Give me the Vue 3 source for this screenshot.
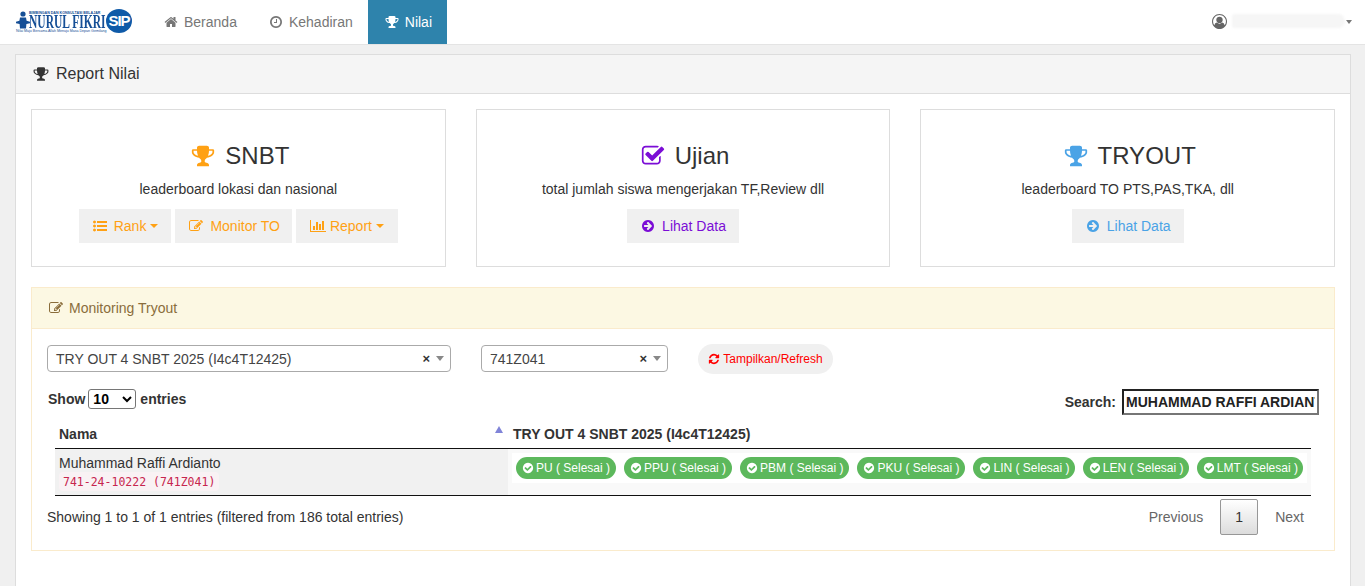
<script setup>
const P = {
  trophy: ['0 0 1792 1792', 'M522 883q-74-162-74-371h-256v96q0 78 94.5 162t235.5 113zm1078-275v-96h-256q0 209-74 371 141-29 235.5-113t94.5-162zm128-128v128q0 71-41.5 143t-112 130-173 97.5-215.5 44.5q-42 54-95 95-38 34-52.5 72.5t-14.5 89.5q0 54 30.5 91t97.5 37q75 0 133.5 45.5t58.5 114.5v64q0 14-9 23t-23 9h-832q-14 0-23-9t-9-23v-64q0-69 58.5-114.5t133.5-45.5q67 0 97.5-37t30.5-91q0-51-14.5-89.5t-52.5-72.5q-53-41-95-95-113-5-215.5-44.5t-173-97.5-112-130-41.5-143v-128q0-40 28-68t68-28h288v-96q0-66 47-113t113-47h576q66 0 113 47t47 113v96h288q40 0 68 28t28 68z'],
  home: ['0 0 1792 1792', 'M1472 992v480q0 26-19 45t-45 19h-384v-384h-256v384h-384q-26 0-45-19t-19-45v-480q0-1 .5-3t.5-3l575-474 575 474q1 2 1 6zm223-69l-62 74q-8 9-21 11h-3q-13 0-21-7l-692-577-692 577q-12 8-24 7-13-2-21-11l-62-74q-8-10-7-23.5t11-21.5l719-599q32-26 76-26t76 26l244 204v-195q0-14 9-23t23-9h192q14 0 23 9t9 23v408l219 182q10 8 11 21.5t-7 23.5z'],
  clock: ['0 0 1792 1792', 'M1024 544v448q0 14-9 23t-23 9h-320q-14 0-23-9t-9-23v-64q0-14 9-23t23-9h224v-352q0-14 9-23t23-9h64q14 0 23 9t9 23zm416 352q0-148-73-273t-198-198-273-73-273 73-198 198-73 273 73 273 198 198 273 73 273-73 198-198 73-273zm224 0q0 209-103 385.5t-279.5 279.5-385.5 103-385.5-103-279.5-279.5-103-385.5 103-385.5 279.5-279.5 385.5-103 385.5 103 279.5 279.5 103 385.5z'],
  check: ['0 0 1792 1792', 'M1472 930v318q0 119-84.5 203.5t-203.5 84.5h-832q-119 0-203.5-84.5t-84.5-203.5v-832q0-119 84.5-203.5t203.5-84.5h832q63 0 117 25 15 7 18 23 3 17-9 29l-49 49q-10 10-23 10-3 0-9-2-23-6-45-6h-832q-66 0-113 47t-47 113v832q0 66 47 113t113 47h832q66 0 113-47t47-113v-254q0-13 9-22l64-64q10-10 23-10 6 0 12 3 20 8 20 29zm231-489l-814 814q-24 24-57 24t-57-24l-430-430q-24-24-24-57t24-57l110-110q24-24 57-24t57 24l263 263 647-647q24-24 57-24t57 24l110 110q24 24 24 57t-24 57z'],
  list: ['0 0 1792 1792', 'M384 1408q0 80-56 136t-136 56-136-56-56-136 56-136 136-56 136 56 56 136zm0-512q0 80-56 136t-136 56-136-56-56-136 56-136 136-56 136 56 56 136zm1408 416v192q0 13-9.5 22.5t-22.5 9.5h-1216q-13 0-22.5-9.5t-9.5-22.5v-192q0-13 9.5-22.5t22.5-9.5h1216q13 0 22.5 9.5t9.5 22.5zm-1408-928q0 80-56 136t-136 56-136-56-56-136 56-136 136-56 136 56 56 136zm1408 416v192q0 13-9.5 22.5t-22.5 9.5h-1216q-13 0-22.5-9.5t-9.5-22.5v-192q0-13 9.5-22.5t22.5-9.5h1216q13 0 22.5 9.5t9.5 22.5zm0-512v192q0 13-9.5 22.5t-22.5 9.5h-1216q-13 0-22.5-9.5t-9.5-22.5v-192q0-13 9.5-22.5t22.5-9.5h1216q13 0 22.5 9.5t9.5 22.5z'],
  edit: ['0 0 1792 1792', 'M888 1184l116-116-152-152-116 116v56h96v96h56zm440-720q-16-16-33 1l-350 350q-17 17-1 33t33-1l350-350q17-17 1-33zm80 594v190q0 119-84.5 203.5t-203.5 84.5h-832q-119 0-203.5-84.5t-84.5-203.5v-832q0-119 84.5-203.5t203.5-84.5h832q63 0 117 25 15 7 18 23 3 17-9 29l-49 49q-14 14-32 8-23-6-45-6h-832q-66 0-113 47t-47 113v832q0 66 47 113t113 47h832q66 0 113-47t47-113v-126q0-13 9-22l64-64q15-15 35-7t20 29zm-96-738l288 288-672 672h-288v-288zm444 132l-92 92-288-288 92-92q28-28 68-28t68 28l152 152q28 28 28 68t-28 68z'],
  bars: ['0 0 2048 1792', 'M640 896v512h-256v-512h256zm384-512v1024h-256v-1024h256zm1024 1152v128h-2048v-1536h128v1408h1920zm-640-896v768h-256v-768h256zm384-384v1152h-256v-1152h256z'],
  arrow: ['0 0 1792 1792', 'M1413 896q0-27-18-45l-91-91-362-362q-18-18-45-18t-45 18l-91 91q-18 18-18 45t18 45l189 189h-502q-26 0-45 19t-19 45v128q0 26 19 45t45 19h502l-189 189q-19 19-19 45t19 45l91 91q18 18 45 18t45-18l362-362 91-91q18-18 18-45zm251 0q0 209-103 385.5t-279.5 279.5-385.5 103-385.5-103-279.5-279.5-103-385.5 103-385.5 279.5-279.5 385.5-103 385.5 103 279.5 279.5 103 385.5z'],
  refresh: ['0 0 1792 1792', 'M1639 1056q0 5-1 7-64 268-268 434.5t-478 166.5q-146 0-282.5-55t-243.5-157l-129 129q-19 19-45 19t-45-19-19-45v-448q0-26 19-45t45-19h448q26 0 45 19t19 45-19 45l-137 137q71 66 161 102t187 36q134 0 250-65t186-179q11-17 53-117 8-23 30-23h192q13 0 22.5 9.5t9.5 22.5zm25-800v448q0 26-19 45t-45 19h-448q-26 0-45-19t-19-45 19-45l138-138q-148-137-349-137-134 0-250 65t-186 179q-11 17-53 117-8 23-30 23h-199q-13 0-22.5-9.5t-9.5-22.5v-7q65-268 270-434.5t480-166.5q146 0 284 55.5t245 156.5l130-129q19-19 45-19t45 19 19 45z'],
  ok: ['0 0 1792 1792', 'M1412 734q0-28-18-46l-91-90q-19-19-45-19t-45 19l-408 407-226-226q-19-19-45-19t-45 19l-91 90q-18 18-18 46 0 27 18 45l362 362q19 19 45 19 27 0 46-19l543-543q18-18 18-45zm252 162q0 209-103 385.5t-279.5 279.5-385.5 103-385.5-103-279.5-279.5-103-385.5 103-385.5 279.5-279.5 385.5-103 385.5 103 279.5 279.5 103 385.5z'],
  user: ['0 0 1792 1792', 'M896 0q182 0 348 71t286 191 191 286 71 348q0 181-70.5 347t-190.5 286-286 191.5-349 71.5-349-71-285.5-191.5-190.5-286-71-347.5 71-348 191-286 286-191 348-71zm619 1351q149-205 149-455 0-156-61-298t-164-245-245-164-298-61-298 61-245 164-164 245-61 298q0 250 149 455 66-327 306-327 131 128 313 128t313-128q240 0 306 327zm-235-647q0-159-112.5-271.5t-271.5-112.5-271.5 112.5-112.5 271.5 112.5 271.5 271.5 112.5 271.5-112.5 112.5-271.5z']
}
const subjects = ['PU', 'PPU', 'PBM', 'PKU', 'LIN', 'LEN', 'LMT']
</script>

<template>
  <div class="page">
    <nav class="nav">
      <div class="logo">
        <div class="logo-left">
          <div class="logo-row">
            <svg class="logo-man" viewBox="0 0 14 18" width="14" height="18">
              <circle cx="7" cy="3" r="2.6" fill="#164f96" />
              <path d="M4 6.5h6l.6 3.2 3.4 1v1.6l-3.6.6-.4 4.6H4l-.4-4.6L0 12.300v-1.600l3.400-1z" fill="#164f96" />
            </svg>
            <div class="logo-words">
              <span class="logo-top">BIMBINGAN DAN KONSULTASI BELAJAR</span>
              <span class="logo-main">NURUL FIKRI</span>
            </div>
          </div>
          <span class="logo-sub">Nilai Maju Bersama Allah Menuju Masa Depan Gemilang</span>
        </div>
        <span class="logo-sip">SIP</span>
      </div>
      <a class="tab"><svg class="ic" :viewBox="P.home[0]"><path :d="P.home[1]" /></svg>Beranda</a>
      <a class="tab"><svg class="ic" :viewBox="P.clock[0]"><path :d="P.clock[1]" /></svg>Kehadiran</a>
      <a class="tab active"><svg class="ic" :viewBox="P.trophy[0]"><path :d="P.trophy[1]" /></svg>Nilai</a>
      <div class="user">
        <svg class="user-ic" :viewBox="P.user[0]"><path :d="P.user[1]" /></svg>
        <span class="user-blur"></span>
        <span class="user-caret"></span>
      </div>
    </nav>

    <section class="panel">
      <header class="panel-head">
        <svg class="head-ic" :viewBox="P.trophy[0]"><path :d="P.trophy[1]" /></svg>Report Nilai
      </header>
      <div class="panel-body">
        <div class="cards">
          <article class="card">
            <h3 class="card-title">
              <svg class="title-ic orange" :viewBox="P.trophy[0]"><path :d="P.trophy[1]" /></svg>SNBT
            </h3>
            <p class="card-text">leaderboard lokasi dan nasional</p>
            <div class="card-btns">
              <a class="btn orange"><svg class="ic g7" :viewBox="P.list[0]"><path :d="P.list[1]" /></svg>Rank<span class="caret"></span></a>
              <a class="btn btn-monitor orange"><svg class="ic g7" :viewBox="P.edit[0]"><path :d="P.edit[1]" /></svg>Monitor TO</a>
              <a class="btn btn-report orange"><svg class="ic wide" :viewBox="P.bars[0]"><path :d="P.bars[1]" /></svg>Report<span class="caret"></span></a>
            </div>
          </article>
          <article class="card">
            <h3 class="card-title">
              <svg class="title-ic purple" :viewBox="P.check[0]"><path :d="P.check[1]" /></svg>Ujian
            </h3>
            <p class="card-text">total jumlah siswa mengerjakan TF,Review dll</p>
            <div class="card-btns">
              <a class="btn purple"><svg class="ic g7" :viewBox="P.arrow[0]"><path :d="P.arrow[1]" /></svg>Lihat Data</a>
            </div>
          </article>
          <article class="card">
            <h3 class="card-title">
              <svg class="title-ic blue" :viewBox="P.trophy[0]"><path :d="P.trophy[1]" /></svg>TRYOUT
            </h3>
            <p class="card-text">leaderboard TO PTS,PAS,TKA, dll</p>
            <div class="card-btns">
              <a class="btn blue"><svg class="ic g7" :viewBox="P.arrow[0]"><path :d="P.arrow[1]" /></svg>Lihat Data</a>
            </div>
          </article>
        </div>

        <section class="monitor">
          <header class="monitor-head">
            <svg class="ic" :viewBox="P.edit[0]"><path :d="P.edit[1]" /></svg>Monitoring Tryout
          </header>
          <div class="monitor-body">
            <div class="filters">
              <div class="sel sel-a"><span>TRY OUT 4 SNBT 2025 (I4c4T12425)</span><b class="sel-x">×</b><i class="sel-arrow"></i></div>
              <div class="sel sel-b"><span>741Z041</span><b class="sel-x">×</b><i class="sel-arrow"></i></div>
              <a class="refresh"><svg class="refresh-ic" :viewBox="P.refresh[0]"><path :d="P.refresh[1]" /></svg>Tampilkan/Refresh</a>
            </div>

            <div class="dt-top">
              <label class="len">Show
                <select class="len-sel"><option>10</option></select>
                entries</label>
              <label class="search">Search:
                <input class="search-in" value="MUHAMMAD RAFFI ARDIANTO" />
              </label>
            </div>

            <table class="tbl">
              <thead>
                <tr>
                  <th class="th-name">Nama<span class="sort"></span></th>
                  <th>TRY OUT 4 SNBT 2025 (I4c4T12425)</th>
                </tr>
              </thead>
              <tbody>
                <tr>
                  <td class="td-name">
                    <div class="name">Muhammad Raffi Ardianto</div>
                    <code class="code">741-24-10222 (741Z041)</code>
                  </td>
                  <td class="td-badges">
                    <div class="badges">
                      <span v-for="s in subjects" :key="s" class="badge">
                        <svg class="badge-ic" :viewBox="P.ok[0]"><path :d="P.ok[1]" /></svg>{{ s }} ( Selesai )
                      </span>
                    </div>
                  </td>
                </tr>
              </tbody>
            </table>

            <div class="dt-bottom">
              <span class="info">Showing 1 to 1 of 1 entries (filtered from 186 total entries)</span>
              <div class="pager">
                <a class="pg">Previous</a>
                <a class="pg current">1</a>
                <a class="pg">Next</a>
              </div>
            </div>
          </div>
        </section>
      </div>
    </section>
  </div>
</template>

<style>
html, body { margin: 0; height: 586px; overflow: hidden; background: #f0f0f0; }
</style>

<style scoped>
.page { font-family: "Liberation Sans", Arial, sans-serif; font-size: 14px; line-height: 20px; color: #333; background: #f0f0f0; height: 586px; overflow: hidden; }
svg { fill: currentColor; display: block; flex: none; }
p, h3 { margin: 0; }

.nav { height: 44px; background: #fff; border-bottom: 1px solid #e4e4e4; display: flex; align-items: stretch; padding-left: 16px; }
.logo { display: flex; align-items: center; width: 132px; color: #164f96; }
.logo-left { width: 90px; display: flex; flex-direction: column; }
.logo-row { display: flex; }
.logo-man { margin-right: -1px; }
.logo-words { display: flex; flex-direction: column; width: 77px; }
.logo-top { font-size: 3.6px; line-height: 4px; font-weight: 700; white-space: nowrap; }
.logo-main { font-family: "Liberation Serif", serif; font-weight: 700; font-size: 18px; line-height: 14px; white-space: nowrap; transform: scaleX(.64); transform-origin: left; }
.logo-sub { font-size: 3.6px; line-height: 5px; white-space: nowrap; }
.logo-sip { width: 26px; height: 24px; border-radius: 50%; background: #0f5aa8; color: #fff; font-weight: 700; font-size: 15px; line-height: 24px; text-align: center; letter-spacing: -1px; margin-top: -2px; }
.tab { display: flex; align-items: center; padding: 0 16px; color: #777; }
.tab .ic { margin-right: 6px; }
.tab.active { background: #2e83ac; color: #fff; margin-left: -1px; padding: 0 15px 0 17px; }
.ic { width: 14px; height: 14px; margin-right: 6px; }
.ic.g7 { margin-right: 7px; }
.ic.wide { width: 16px; margin-right: 4px; }
.user { margin-left: auto; display: flex; align-items: center; width: 153px; margin-top: -2px; }
.user-ic { width: 15px; height: 15px; color: #666; margin-right: 5px; }
.user-blur { width: 113px; height: 14px; background: #f6f6f6; border-radius: 3px 8px 8px 3px; filter: blur(1px); }
.user-caret { width: 0; height: 0; margin-left: 1px; margin-top: 1px; border-top: 4px solid #777; border-left: 3px solid transparent; border-right: 3px solid transparent; }

.panel { margin: 9px 14px 0 15px; background: #fff; border: 1px solid #ddd; height: 600px; }
.panel-head { height: 38px; background: #f5f5f5; border-bottom: 1px solid #ddd; display: flex; align-items: center; padding-left: 17px; font-size: 16px; }
.head-ic { width: 16px; height: 16px; margin-right: 7px; }
.panel-body { padding: 15px; }

.cards { display: flex; gap: 30px; }
.card { flex: 1 1 0; height: 158px; box-sizing: border-box; border: 1px solid #ddd; text-align: center; padding-top: 31px; }
.card-title { display: flex; justify-content: center; align-items: center; font-weight: 400; font-size: 24px; line-height: 30px; color: #333; padding-left: 4px; }
.title-ic { width: 24px; height: 24px; margin-right: 10px; }
.orange { color: #ffa114; }
.purple { color: #7b0dd6; }
.blue { color: #4aa3e6; }
.card-text { margin-top: 8px; line-height: 20px; }
.card-btns { display: flex; justify-content: center; gap: 4px; margin-top: 10px; }
.btn { display: flex; align-items: center; height: 34px; padding: 0 13px 0 14px; background: #f0f0f0; }
.btn.btn-monitor { padding-right: 12px; }
.btn.btn-report { padding-right: 14px; }
.caret { width: 0; height: 0; margin-left: 4px; border-top: 4px solid currentColor; border-left: 4px solid transparent; border-right: 4px solid transparent; }

.monitor { margin-top: 20px; border: 1px solid #faebcc; height: 264px; box-sizing: border-box; }
.monitor-head { background: #fcf8e3; border-bottom: 1px solid #faebcc; color: #8a6d3b; display: flex; align-items: center; padding-left: 17px; box-sizing: border-box; height: 41px; }
.monitor-body { padding: 15px 15px 0; }
.filters { display: flex; align-items: center; height: 30px; }
.sel { height: 27px; box-sizing: border-box; border: 1px solid #aaa; border-radius: 4px; display: flex; align-items: center; padding-left: 8px; color: #444; margin-top: -1px; }
.sel span { flex: 1; }
.sel-a { width: 404px; }
.sel-b { width: 187px; margin-left: 30px; }
.sel-x { font-size: 13px; margin-right: 6px; color: #333; line-height: 1; }
.sel-arrow { width: 0; height: 0; margin-right: 6px; border-top: 5px solid #888; border-left: 4px solid transparent; border-right: 4px solid transparent; }
.refresh { margin-left: 30px; width: 135px; height: 30px; box-sizing: border-box; border-radius: 15px; background: #f0f0f0; color: #f00; font-size: 12px; display: flex; align-items: center; justify-content: center; }
.refresh-ic { width: 12px; height: 12px; margin-right: 3px; }

.dt-top { display: flex; justify-content: space-between; align-items: flex-start; font-weight: 700; margin-top: 13px; padding-left: 1px; height: 35px; }
.len { display: flex; align-items: center; gap: 4px; height: 24px; }
.len-sel { width: 48px; height: 20px; margin-left: -1px; font: 700 14px "Liberation Sans", Arial, sans-serif; background: #fff; border: 1px solid #767676; border-radius: 3px; padding: 0; }
.search { margin-top: 2px; display: flex; align-items: center; gap: 6px; }
.search-in { width: 197px; height: 26px; box-sizing: border-box; border: 2px solid; border-color: #222 #767676 #767676 #222; padding: 1px 2px; font: 700 14px "Liberation Sans", Arial, sans-serif; color: #222; outline: none; }

.tbl { width: 1256px; margin-left: 8px; border-collapse: collapse; table-layout: fixed; }
.tbl th { text-align: left; height: 23px; padding: 0 4px 3px 5px; border-bottom: 1px solid #111; font-weight: 700; vertical-align: middle; }
.tbl th.th-name { width: 445px; position: relative; padding-left: 4px; }
.sort { position: absolute; right: 5px; top: 4px; width: 0; height: 0; border-bottom: 7px solid #8084d8; border-left: 4.5px solid transparent; border-right: 4.5px solid transparent; }
.tbl td { border-bottom: 1px solid #111; padding: 0; height: 47px; box-sizing: border-box; vertical-align: top; }
.tbl td.td-name { background: #f1f1f1; padding: 4px 4px 0; }
.name { line-height: 20px; }
.code { display: block; width: fit-content; margin-top: -1px; height: 19px; font-family: "DejaVu Sans Mono", monospace; font-size: 11.5px; line-height: 20px; color: #c7254e; background: #f9f2f4; padding: 0 4px; border-radius: 4px; }
.tbl td.td-badges { padding: 4px 4px 0; background: #f9f9f9; }
.badges { display: flex; gap: 8px; height: 30px; background: #fff; box-sizing: border-box; padding: 4px 4px 0; }
.badge { display: flex; align-items: center; height: 22px; padding: 0 6px; border-radius: 11px; background: #5cb85c; color: #fff; font-size: 12px; white-space: nowrap; }
.badge:nth-child(n+5) { padding-right: 5.3px; }
.badge-ic { width: 12px; height: 12px; margin-right: 2px; }

.dt-bottom { display: flex; justify-content: space-between; align-items: flex-start; }
.info { margin-top: 11px; }
.pager { display: flex; margin-top: 3px; align-items: center; }
.pg { padding: 0 15px; height: 36px; display: flex; align-items: center; color: #666; box-sizing: border-box; }
.pg.current { border: 1px solid #979797; border-radius: 2px; background: linear-gradient(#fff, #dcdcdc); color: #333; width: 38px; padding: 0; justify-content: center; margin: 0 2px; }
</style>
